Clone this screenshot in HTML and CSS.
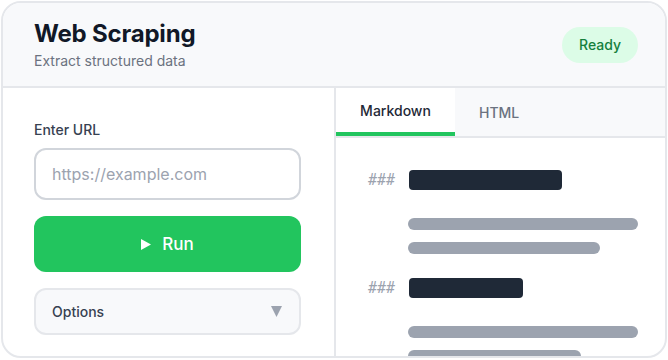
FILE: index.html
```html
<!DOCTYPE html>
<html lang="en">
<head>
<meta charset="utf-8">
<title>Web Scraping</title>
<link rel="stylesheet" href="styles.css">
</head>
<body>
<div class="card">
  <header class="header">
    <div class="titles">
      <h1 class="title">Web Scraping</h1>
      <p class="subtitle">Extract structured data</p>
    </div>
    <span class="badge">Ready</span>
  </header>
  <div class="main">
    <section class="left">
      <label class="label" for="url">Enter URL</label>
      <input id="url" class="input" type="text" placeholder="https://example.com">
      <button class="run" type="button">
        <svg class="play" width="10" height="11" viewBox="0 0 10 11"><path d="M0 0 L10 5.5 L0 11 Z" fill="#ffffff"/></svg>
        <span>Run</span>
      </button>
      <div class="options">
        <span>Options</span>
        <svg class="caret" width="11" height="11" viewBox="0 0 11 11"><path d="M0 0 H11 L5.5 11 Z" fill="#9ca3af"/></svg>
      </div>
    </section>
    <section class="right">
      <nav class="tabs">
        <div class="tab active">Markdown</div>
        <div class="tab">HTML</div>
      </nav>
      <div class="preview">
        <div class="block">
          <div class="heading"><span class="hash">###</span><span class="hbar w153"></span></div>
          <div class="line w230"></div>
          <div class="line w192"></div>
        </div>
        <div class="block">
          <div class="heading"><span class="hash">###</span><span class="hbar w114"></span></div>
          <div class="line w230"></div>
          <div class="line w173"></div>
        </div>
      </div>
    </section>
  </div>
</div>
</body>
</html>
```

FILE: styles.css
```css
* { box-sizing: border-box; }
html, body { margin: 0; padding: 0; background: #ffffff; }
body { font-family: Inter, "Noto Sans", sans-serif; }

.card {
  width: 666px;
  height: 357px;
  margin: 1px;
  border: 2px solid #e5e7eb;
  border-radius: 20px;
  overflow: hidden;
  background: #ffffff;
  display: flex;
  flex-direction: column;
}

.header {
  height: 85px;
  flex: none;
  background: #f8f9fb;
  border-bottom: 2px solid #e5e7eb;
  display: flex;
  align-items: center;
  justify-content: space-between;
  padding: 0 27px 0 31px;
}
.title {
  margin: 0;
  font-size: 24px;
  line-height: 30px;
  font-weight: 700;
  color: #111827;
  letter-spacing: -0.2px;
}
.subtitle {
  margin: 2px 0 0;
  font-size: 14px;
  line-height: 20px;
  color: #6b7280;
}
.badge {
  height: 36px;
  padding: 0 17px;
  border-radius: 18px;
  background: #dcfce7;
  color: #15803d;
  font-size: 14px;
  font-weight: 500;
  display: flex;
  align-items: center;
}

.main { flex: 1; display: flex; min-height: 0; }

.left {
  width: 333px;
  flex: none;
  border-right: 2px solid #e5e7eb;
  padding: 32px 33px 0 31px;
  display: flex;
  flex-direction: column;
}
.label {
  font-size: 14px;
  line-height: 20px;
  font-weight: 500;
  color: #374151;
  margin-bottom: 8px;
}
.input {
  height: 52px;
  border: 2px solid #d1d5db;
  border-radius: 12px;
  padding: 0 16px;
  font-family: inherit;
  font-size: 16px;
  color: #111827;
  background: #ffffff;
  outline: none;
}
.input::placeholder { color: #9ca3af; }
.run {
  margin-top: 16px;
  height: 56px;
  border: none;
  border-radius: 12px;
  background: #22c55e;
  color: #ffffff;
  font-family: inherit;
  font-size: 17px;
  font-weight: 500;
  display: flex;
  align-items: center;
  justify-content: center;
  gap: 11px;
  padding: 0;
}
.options {
  margin-top: 16px;
  height: 47px;
  border: 2px solid #e5e7eb;
  border-radius: 12px;
  background: #f8f9fb;
  display: flex;
  align-items: center;
  justify-content: space-between;
  padding: 0 17px 0 16px;
  font-size: 14px;
  font-weight: 500;
  color: #374151;
}

.right { flex: 1; display: flex; flex-direction: column; min-width: 0; }
.tabs {
  height: 50px;
  flex: none;
  background: #f8f9fb;
  border-bottom: 2px solid #e5e7eb;
  display: flex;
}
.tab {
  padding: 0 24px;
  display: flex;
  align-items: center;
  font-size: 14px;
  font-weight: 500;
  color: #6b7280;
}
.tab.active {
  width: 119px;
  justify-content: center;
  padding: 0;
  background: #ffffff;
  color: #1f2937;
  border-bottom: 4px solid #22c55e;
}

.preview {
  padding: 32px 27px 0 32px;
  display: flex;
  flex-direction: column;
  gap: 24px;
}
.block { display: flex; flex-direction: column; gap: 12px; }
.heading {
  display: flex;
  align-items: center;
  height: 20px;
  margin-bottom: 16px;
}
.hash {
  width: 41px;
  flex: none;
  font-family: "DejaVu Sans Mono", monospace;
  font-style: italic;
  font-size: 15px;
  color: #9ca3af;
}
.hbar { display: block; height: 20px; border-radius: 4px; background: #1f2937; }
.line { height: 12px; border-radius: 6px; background: #9ca3af; margin-left: 40px; }
.w153 { width: 153px; }
.w114 { width: 114px; }
.w230 { width: 230px; }
.w192 { width: 192px; }
.w173 { width: 173px; }
```
